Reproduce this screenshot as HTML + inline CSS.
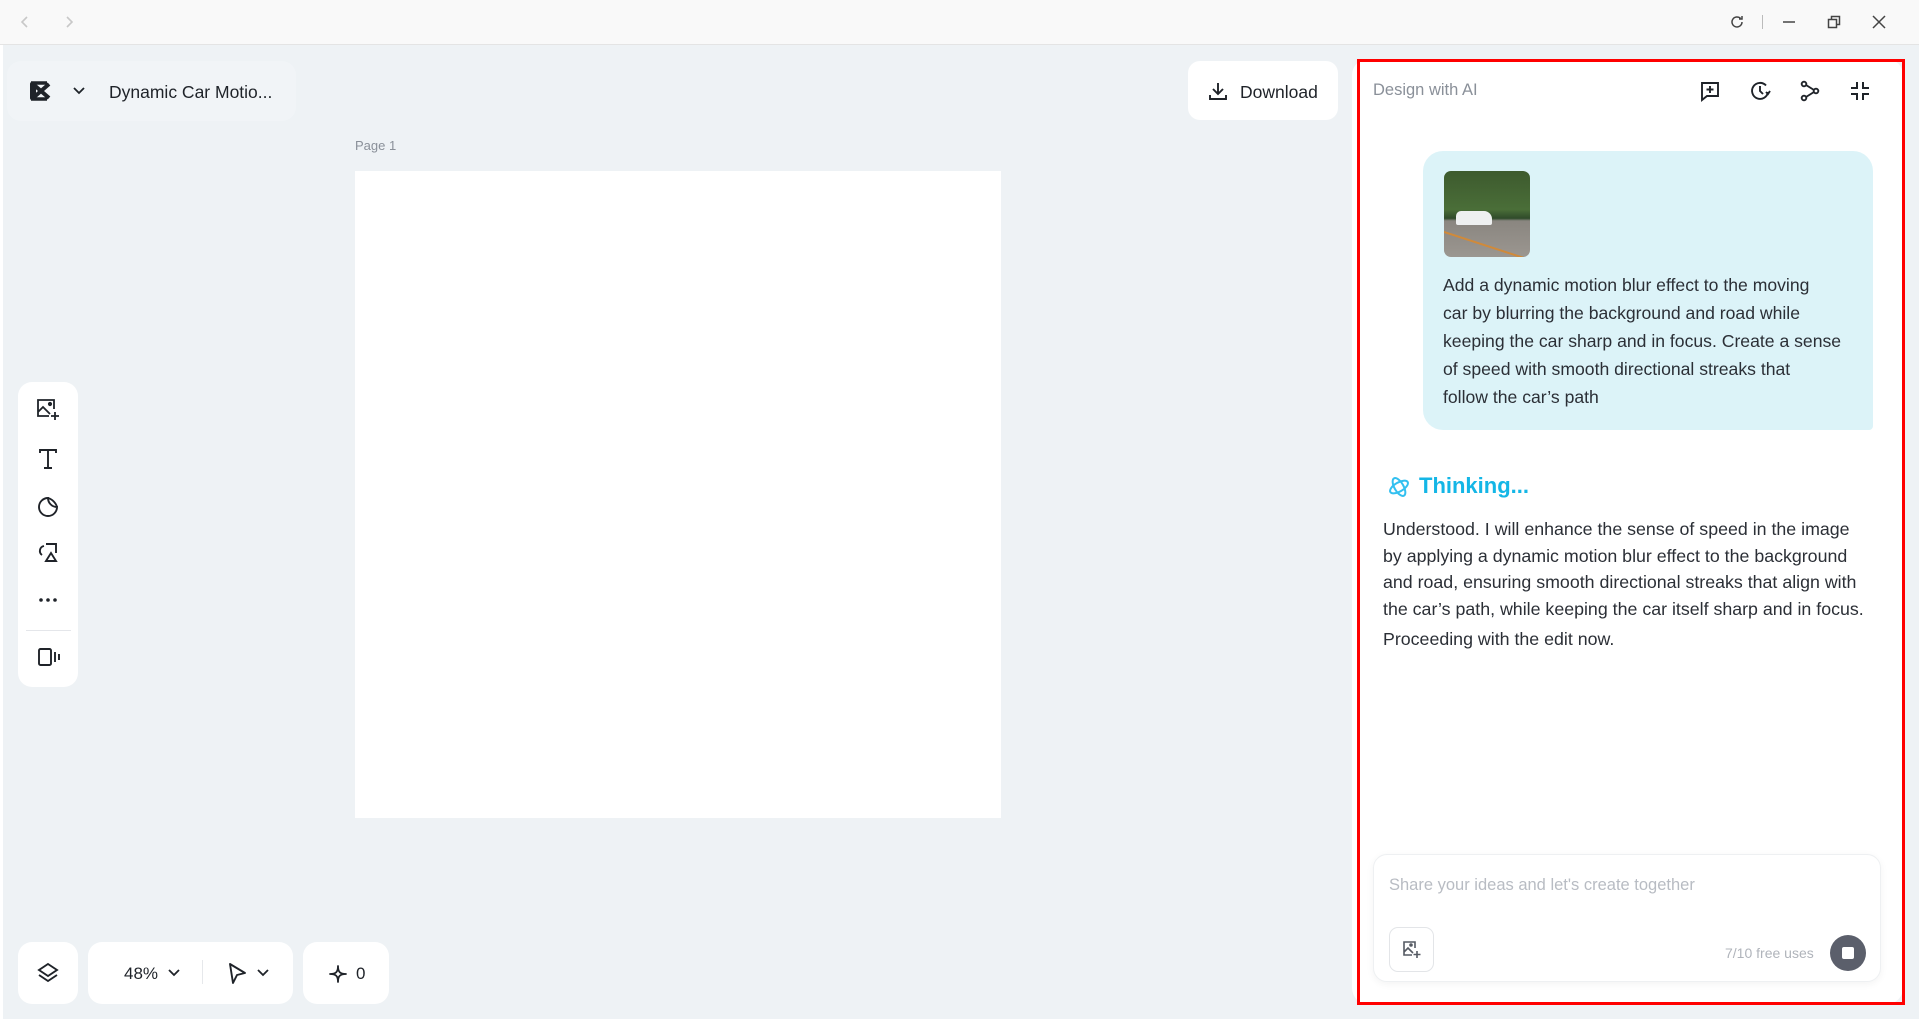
<!DOCTYPE html>
<html><head><meta charset="utf-8"><style>
*{box-sizing:border-box;margin:0;padding:0}
body{width:1919px;height:1019px;overflow:hidden;background:#eef2f5;font-family:"Liberation Sans",sans-serif;position:relative;color:#1f2329}
.abs{position:absolute}
.tb{left:0;top:0;width:1919px;height:45px;background:#f9f9f9;border-bottom:1px solid #e4e4e4}
.card{background:#fff;border-radius:14px}
svg{position:absolute}
.msg{font-size:17.8px;line-height:28px;color:#2b2f36}
</style></head><body>
<div class="abs tb">
<svg style="left:18px;top:15px" width="14" height="14" viewBox="0 0 14 14"><path d="M9 2L4 7l5 5" fill="none" stroke="#c8c8c8" stroke-width="1.6"/></svg>
<svg style="left:62px;top:15px" width="14" height="14" viewBox="0 0 14 14"><path d="M5 2l5 5-5 5" fill="none" stroke="#c8c8c8" stroke-width="1.6"/></svg>
<svg style="left:1729px;top:14px" width="16" height="16" viewBox="0 0 16 16"><path d="M13 8a5 5 0 1 1-1.5-3.6M13 2v3h-3" fill="none" stroke="#444" stroke-width="1.5"/></svg>
<div class="abs" style="left:1762px;top:15px;width:1px;height:14px;background:#bbb"></div>
<svg style="left:1781px;top:14px" width="16" height="16" viewBox="0 0 16 16"><path d="M2 8h12" stroke="#444" stroke-width="1.5"/></svg>
<svg style="left:1826px;top:14px" width="16" height="16" viewBox="0 0 16 16"><path d="M2.5 5.5h8v8h-8zM5.5 5.5v-3h8v8h-3" fill="none" stroke="#444" stroke-width="1.5"/></svg>
<svg style="left:1871px;top:14px" width="16" height="16" viewBox="0 0 16 16"><path d="M2 2l12 12M14 2L2 14" stroke="#444" stroke-width="1.5"/></svg>
</div>
<div class="abs" style="left:0;top:45px;width:3px;height:974px;background:#fff"></div>

<div class="abs card" style="left:7px;top:61px;width:289px;height:60px;background:#f1f4f7"></div>
<svg style="left:28px;top:80px" width="27" height="22" viewBox="0 0 27 22"><path d="M5 4l16 14M21 4L5 18" stroke="#1f2329" stroke-width="4" fill="none"/><rect x="2" y="2" width="6" height="18" rx="2" fill="#1f2329"/><path d="M3 3h16M3 19h16" stroke="#1f2329" stroke-width="3.5"/></svg>
<svg style="left:72px;top:86px" width="14" height="10" viewBox="0 0 14 10"><path d="M2 2l5 5 5-5" fill="none" stroke="#1f2329" stroke-width="1.8"/></svg>
<div class="abs" style="left:109px;top:82px;font-size:17.5px">Dynamic Car Motio...</div>

<div class="abs card" style="left:1188px;top:61px;width:150px;height:59px;border-radius:12px"></div>
<svg style="left:1208px;top:81px" width="20" height="20" viewBox="0 0 20 20"><path d="M10 2v11M5 8l5 5 5-5M2 14v4h16v-4" fill="none" stroke="#1f2329" stroke-width="1.9"/></svg>
<div class="abs" style="left:1240px;top:82px;font-size:17.5px">Download</div>

<div class="abs" style="left:355px;top:138px;font-size:13px;color:#8a9099">Page 1</div>
<div class="abs" style="left:355px;top:171px;width:646px;height:647px;background:#fff"></div>

<div class="abs card" style="left:18px;top:382px;width:60px;height:305px"></div>
<svg style="left:35px;top:397px" width="26" height="26" viewBox="0 0 26 26" fill="none" stroke="#1f2329" stroke-width="1.8"><path d="M19 12V3H3v16h11M3 15l5-5 7 7"/><circle cx="15" cy="7" r="1.2" fill="#1f2329"/><path d="M20 15v8M16 19h8"/></svg>
<svg style="left:36px;top:447px" width="24" height="24" viewBox="0 0 24 24" fill="none" stroke="#1f2329" stroke-width="1.9"><path d="M4 6V3h16v3M12 3v18M8 21h8"/></svg>
<svg style="left:36px;top:495px" width="24" height="24" viewBox="0 0 24 24" fill="none" stroke="#1f2329" stroke-width="1.9"><path d="M21 12a9 9 0 1 1-9-9c0 5 4 9 9 9zM12 3c4 1 8 5 9 9"/></svg>
<svg style="left:36px;top:541px" width="24" height="24" viewBox="0 0 24 24" fill="none" stroke="#1f2329" stroke-width="1.9"><path d="M8 5a5 5 0 0 0-2 9M10 3h10v9M10 20l5-8 5 8z"/></svg>
<svg style="left:36px;top:594px" width="24" height="12" viewBox="0 0 24 12" fill="#1f2329"><circle cx="5" cy="6" r="1.8"/><circle cx="12" cy="6" r="1.8"/><circle cx="19" cy="6" r="1.8"/></svg>
<div class="abs" style="left:26px;top:630px;width:45px;height:1px;background:#e4e6ea"></div>
<svg style="left:36px;top:645px" width="26" height="24" viewBox="0 0 26 24" fill="none" stroke="#1f2329" stroke-width="1.9"><rect x="3" y="4" width="12" height="16" rx="1.5"/><path d="M19 7v10M23 9v6"/></svg>

<div class="abs card" style="left:18px;top:942px;width:60px;height:62px"></div>
<svg style="left:36px;top:961px" width="24" height="24" viewBox="0 0 24 24" fill="none" stroke="#1f2329" stroke-width="1.9"><path d="M12 3l9 6-9 6-9-6zM3 14l9 6 9-6"/></svg>
<div class="abs card" style="left:88px;top:942px;width:205px;height:62px"></div>
<div class="abs" style="left:124px;top:964px;font-size:17px">48%</div>
<svg style="left:167px;top:968px" width="14" height="10" viewBox="0 0 14 10"><path d="M2 2l5 5 5-5" fill="none" stroke="#1f2329" stroke-width="1.8"/></svg>
<div class="abs" style="left:202px;top:960px;width:1px;height:24px;background:#e6e8eb"></div>
<svg style="left:226px;top:961px" width="22" height="24" viewBox="0 0 22 24"><path d="M4 3l15 9-8 2-4 8z" fill="none" stroke="#1f2329" stroke-width="1.9" stroke-linejoin="round"/></svg>
<svg style="left:256px;top:968px" width="14" height="10" viewBox="0 0 14 10"><path d="M2 2l5 5 5-5" fill="none" stroke="#1f2329" stroke-width="1.8"/></svg>
<div class="abs card" style="left:303px;top:942px;width:86px;height:62px"></div>
<svg style="left:328px;top:964px" width="20" height="20" viewBox="0 0 20 20"><path d="M10 2C10 8 12 10 18 10 12 10 10 12 10 18 10 12 8 10 2 10 8 10 10 8 10 2z" fill="none" stroke="#1f2329" stroke-width="1.8" stroke-linejoin="round"/></svg>
<div class="abs" style="left:356px;top:964px;font-size:17px">0</div>

<div class="abs" style="left:1352px;top:59px;width:551px;height:945px;background:#fff;border-radius:16px"></div>
<div class="abs" style="left:1357px;top:59px;width:548px;height:946px;border:3px solid #ff0000"></div>
<div class="abs" style="left:1373px;top:81px;font-size:16.5px;color:#8a9099">Design with AI</div>
<svg style="left:1699px;top:80px" width="22" height="22" viewBox="0 0 22 22" fill="none" stroke="#1f2329" stroke-width="1.9"><path d="M3 3h16v13H8l-5 4zM11 6v7M7.5 9.5h7"/></svg>
<svg style="left:1749px;top:80px" width="22" height="22" viewBox="0 0 22 22" fill="none" stroke="#1f2329" stroke-width="1.9"><path d="M19 12a8 8 0 1 1-2-6.5M11 6v5l3 3M17 12l2 2 2-3"/></svg>
<svg style="left:1799px;top:80px" width="22" height="22" viewBox="0 0 22 22" fill="none" stroke="#1f2329" stroke-width="1.9"><circle cx="5" cy="4" r="2.3"/><circle cx="5" cy="18" r="2.3"/><circle cx="17" cy="11" r="2.3"/><path d="M7 5l8 5M7 17l8-5"/></svg>
<svg style="left:1849px;top:80px" width="22" height="22" viewBox="0 0 22 22" fill="none" stroke="#1f2329" stroke-width="2"><path d="M8 2v6H2M14 2v6h6M8 20v-6H2M14 20v-6h6"/></svg>

<div class="abs" style="left:1423px;top:151px;width:450px;height:279px;background:#dcf3f8;border-radius:20px 20px 4px 20px"></div>
<div class="abs" style="left:1444px;top:171px;width:86px;height:86px;border-radius:7px;overflow:hidden;background:linear-gradient(#3d5a2e 0%,#4a6e38 45%,#2f4a2a 55%,#8a8680 58%,#9b9690 100%)">
<div class="abs" style="left:12px;top:40px;width:36px;height:14px;background:#eef0f0;border-radius:5px 8px 2px 2px"></div>
<div class="abs" style="left:0;top:60px;width:100px;height:2px;background:#d08a3a;transform:rotate(18deg);transform-origin:left"></div>
</div>
<div class="abs msg" style="left:1443px;top:271px;white-space:nowrap;font-size:17.6px">Add a dynamic motion blur effect to the moving<br>car by blurring the background and road while<br>keeping the car sharp and in focus. Create a sense<br>of speed with smooth directional streaks that<br>follow the car’s path</div>

<svg style="left:1386px;top:474px" width="26" height="26" viewBox="0 0 26 26" fill="none" stroke="#33c0f0" stroke-width="2"><ellipse cx="13" cy="13" rx="10" ry="4.5" transform="rotate(-30 13 13)"/><ellipse cx="13" cy="13" rx="4.5" ry="10" transform="rotate(-30 13 13)"/></svg>
<div class="abs" style="left:1419px;top:473px;font-size:22px;font-weight:bold;color:#14b6e6">Thinking...</div>
<div class="abs msg" style="left:1383px;top:516px;width:488px;line-height:26.5px">Understood. I will enhance the sense of speed in the image by applying a dynamic motion blur effect to the background and road, ensuring smooth directional streaks that align with the car’s path, while keeping the car itself sharp and in focus.<div style="margin-top:4px">Proceeding with the edit now.</div></div>

<div class="abs" style="left:1373px;top:854px;width:508px;height:128px;border:1px solid #eef0f2;border-radius:14px;box-shadow:0 2px 8px rgba(0,0,0,0.05);background:#fff"></div>
<div class="abs" style="left:1389px;top:876px;font-size:16.5px;color:#b8bcc3">Share your ideas and let's create together</div>
<div class="abs" style="left:1389px;top:927px;width:45px;height:45px;border:1px solid #e3e5e8;border-radius:9px"></div>
<svg style="left:1401px;top:939px" width="22" height="22" viewBox="0 0 22 22" fill="none" stroke="#555a63" stroke-width="1.6"><path d="M14 9V3H3v13h8M3 13l4-4 5 5"/><circle cx="10" cy="6" r="1" fill="#555a63"/><path d="M16 12v7M12.5 15.5h7"/></svg>
<div class="abs" style="left:1725px;top:945px;font-size:14px;color:#b0b4bb">7/10 free uses</div>
<div class="abs" style="left:1830px;top:935px;width:36px;height:36px;border-radius:50%;background:#5b5f6b"></div>
<div class="abs" style="left:1842px;top:947px;width:12px;height:12px;border-radius:2px;background:#fff"></div>
</body></html>
